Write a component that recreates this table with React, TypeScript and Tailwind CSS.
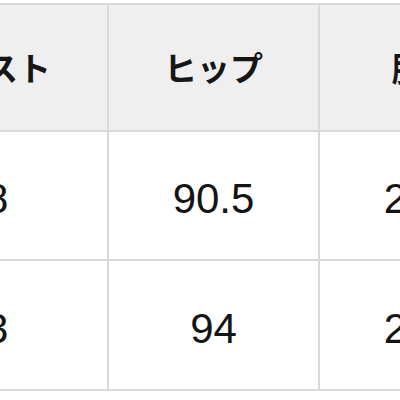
const header = ["ウエスト", "ヒップ", "股下", "わたり"];
const rows = [
    ["68", "90.5", "27.5", "30"],
    ["73", "94", "28.5", "32"],
];

export default function App() {
    return (
        <div className="w-[400px] h-[400px] overflow-hidden bg-white pt-[3px]">
            <div
                className="ml-[-139px] inline-grid grid-cols-[244px_209px_209px_209px] grid-rows-[125px_127px_128px] gap-[2px] p-[2px] bg-[#d9d9d9]"
                style={{ fontFamily: '"Liberation Sans", Arial, "Noto Sans CJK JP", sans-serif' }}
            >
                {header.map((h) => (
                    <div
                        key={h}
                        className="bg-[#efefef] flex items-center justify-center text-[33px] font-bold text-[#161616]"
                        style={{ fontFamily: '"Noto Sans CJK JP", sans-serif' }}
                    >
                        {h}
                    </div>
                ))}
                {rows.map((r, i) =>
                    r.map((v, j) => (
                        <div
                            key={i + "-" + j}
                            className="bg-white flex items-center justify-center text-[42px] text-[#141414] pt-[6px]"
                        >
                            {v}
                        </div>
                    ))
                )}
            </div>
        </div>
    );
}
